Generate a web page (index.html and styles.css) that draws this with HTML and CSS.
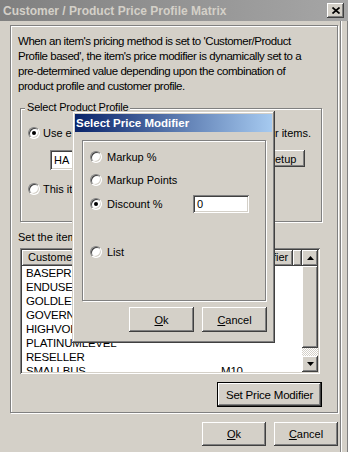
FILE: index.html
```html
<!DOCTYPE html>
<html>
<head>
    <meta charset="utf-8">
    <title>Customer / Product Price Profile Matrix</title>
    <link rel="stylesheet" href="styles.css">
</head>
<body>
<div class="window">
    <div class="titlebar">
        <span class="title">Customer / Product Price Profile Matrix</span>
        <span class="close-btn">
            <svg width="8" height="7" viewBox="0 0 8 7"><path d="M0.5 0.5 L7.5 6.5 M7.5 0.5 L0.5 6.5" stroke="#000" stroke-width="1.7" fill="none"/></svg>
        </span>
    </div>
    <div class="frame">
        <div class="client">
            <div class="panel">
                <p class="intro">When an item's pricing method is set to 'Customer/Product<br>Profile based', the item's price modifier is dynamically set to a<br>pre-determined value depending upon the combination of<br>product profile and customer profile.</p>

                <div class="group">
                    <span class="legend">Select Product Profile</span>
                    <div class="opt-row">
                        <span class="radio checked"></span>
                        <span class="opt-text"><span>Use existing profile</span><span>for all other items.</span></span>
                    </div>
                    <div class="profile-row">
                        <div class="field">HA</div>
                        <button class="btn setup">Setup</button>
                    </div>
                    <div class="opt-row opt-last">
                        <span class="radio"></span>
                        <span>This item uses its own profile.</span>
                    </div>
                </div>

                <p class="set-label">Set the item price modifiers:</p>

                <div class="listview">
                    <div class="lv-main">
                        <div class="lv-header">
                            <span class="hcell col1">Customer Profile</span>
                            <span class="hcell col2">Price Modifier</span>
                            <span class="hcell col3"></span>
                        </div>
                        <div class="lv-row"><span class="col1">BASEPRICE</span><span class="col2"></span></div>
                        <div class="lv-row"><span class="col1">ENDUSER</span><span class="col2"></span></div>
                        <div class="lv-row"><span class="col1">GOLDLEVEL</span><span class="col2"></span></div>
                        <div class="lv-row"><span class="col1">GOVERNMENT</span><span class="col2"></span></div>
                        <div class="lv-row"><span class="col1">HIGHVOLUME</span><span class="col2"></span></div>
                        <div class="lv-row"><span class="col1">PLATINUMLEVEL</span><span class="col2"></span></div>
                        <div class="lv-row"><span class="col1">RESELLER</span><span class="col2"></span></div>
                        <div class="lv-row"><span class="col1">SMALLBUS</span><span class="col2">M10</span></div>
                    </div>
                    <div class="lv-scroll">
                        <span class="sb-btn"><svg width="7" height="4" viewBox="0 0 7 4"><polygon points="0,4 3.5,0 7,4" fill="#000"/></svg></span>
                        <span class="sb-thumb"></span>
                        <span class="sb-track"></span>
                        <span class="sb-btn"><svg width="7" height="4" viewBox="0 0 7 4"><polygon points="0,0 7,0 3.5,4" fill="#000"/></svg></span>
                    </div>
                </div>

                <div class="actions">
                    <button class="btn default wide">Set Price Modifier</button>
                </div>
            </div>

            <div class="footer">
                <button class="btn"><u>O</u>k</button>
                <button class="btn"><u>C</u>ancel</button>
            </div>
        </div>
        <div class="edge"></div>
    </div>

    <!-- modal dialog over the matrix window -->
    <div class="modal">
        <div class="modal-title">Select Price Modifier</div>
        <div class="modal-group">
            <div class="mrow"><span class="radio"></span>Markup %</div>
            <div class="mrow m2"><span class="radio"></span>Markup Points</div>
            <div class="mrow m3"><span class="radio checked"></span><span class="mlabel">Discount %</span><span class="field small">0</span></div>
            <div class="mrow m4"><span class="radio"></span>List</div>
        </div>
        <div class="mbtns">
            <button class="btn"><u>O</u>k</button>
            <button class="btn"><u>C</u>ancel</button>
        </div>
    </div>
</div>
</body>
</html>
```

FILE: styles.css
```css
* {
    box-sizing: border-box;
}

body {
    margin: 0;
    background: #d4d0c8;
    font-family: "Liberation Sans", Arial, sans-serif;
    font-size: 11px;
    color: #000;
}

.window {
    position: relative;
    width: 348px;
    height: 452px;
    overflow: hidden;
    background: #d4d0c8;
}

.titlebar {
    height: 21px;
    display: flex;
    align-items: center;
    justify-content: space-between;
    padding: 0 4px 0 3px;
    background: linear-gradient(90deg, #808080, #a6a6a6);
}

.title {
    font-size: 12px;
    font-weight: bold;
    color: #d4d0c8;
}

.close-btn {
    width: 17px;
    height: 15px;
    display: flex;
    align-items: center;
    justify-content: center;
    background: #d4d0c8;
    box-shadow: inset -1px -1px #404040, inset 1px 1px #fff, inset -2px -2px #808080;
}

.frame {
    display: flex;
    height: 431px;
}

.client {
    width: 340px;
}

.edge {
    flex: 1;
    border-left: 1px solid #808080;
    border-right: 1px solid #808080;
    box-shadow: inset 1px 0 #fff;
}

/* etched frames */
.panel, .group, .modal-group {
    border: 1px solid #808080;
    box-shadow: inset 1px 1px 0 #fff, 1px 1px 0 #fff;
}

.panel {
    margin: 4px 0 0 10px;
    width: 328px;
    height: 388px;
    padding: 8px 15px 0 7px;
}

.intro {
    margin: 0;
    line-height: 15px;
    white-space: nowrap;
    font-size: 11.5px;
    letter-spacing: -0.45px;
}

.group {
    position: relative;
    margin: 14px 0 0 2px;
    width: 302px;
    height: 114px;
    padding: 16px 0 0 7px;
}

.legend {
    position: absolute;
    top: -9px;
    left: 4px;
    padding: 0 2px;
    line-height: 14px;
    letter-spacing: -0.2px;
    background: #d4d0c8;
}

.opt-row {
    display: flex;
    align-items: center;
    height: 16px;
}

.opt-text {
    display: flex;
    justify-content: space-between;
    width: 268px;
}

.opt-last {
    margin-top: 11px;
}

.radio {
    position: relative;
    flex: none;
    width: 12px;
    height: 12px;
    margin-right: 3px;
    border-radius: 50%;
    background: #fff;
    border: 1px solid;
    border-color: #808080 #fff #fff #808080;
    box-shadow: inset 1px 1px #404040, inset -1px -1px #d4d0c8;
}

.radio.checked::after {
    content: "";
    position: absolute;
    left: 3px;
    top: 3px;
    width: 4px;
    height: 4px;
    border-radius: 50%;
    background: #000;
}

.profile-row {
    display: flex;
    align-items: flex-start;
    margin: 9px 0 0 22px;
    height: 20px;
}

.field {
    width: 200px;
    height: 20px;
    padding-left: 4px;
    line-height: 20px;
    background: #fff;
    box-shadow: inset 1px 1px #808080, inset -1px -1px #fff, inset 2px 2px #404040, inset -2px -2px #d4d0c8;
}

.btn {
    width: 64px;
    height: 24px;
    padding: 0;
    border: none;
    font-family: inherit;
    font-size: 11px;
    color: #000;
    background: #d4d0c8;
    box-shadow: inset -1px -1px #404040, inset 1px 1px #fff, inset -2px -2px #808080, inset 2px 2px #d4d0c8;
}

.btn.setup {
    width: 46px;
    height: 17px;
    margin-left: 9px;
}

.btn.default {
    border: 1px solid #000;
}

.btn.wide {
    width: 105px;
    height: 25px;
    font-size: 11.5px;
    letter-spacing: -0.2px;
}

.set-label {
    margin: 8px 0 0;
    line-height: 14px;
}

.listview {
    display: flex;
    margin: 4px 0 0 2px;
    width: 300px;
    height: 126px;
    padding: 2px;
    background: #fff;
    box-shadow: inset 1px 1px #808080, inset -1px -1px #fff, inset 2px 2px #404040, inset -2px -2px #d4d0c8;
}

.lv-main {
    flex: 1;
    overflow: hidden;
}

.lv-header {
    display: flex;
    height: 16px;
}

.hcell {
    height: 16px;
    line-height: 15px;
    background: #d4d0c8;
    box-shadow: inset -1px -1px #404040, inset 1px 1px #fff, inset -2px -2px #808080;
}

.col1 {
    width: 194px;
    padding-left: 4px;
}

.col2 {
    width: 77px;
    padding-left: 5px;
}

.hcell.col1 {
    padding-left: 6px;
}

.col3 {
    flex: 1;
}

.lv-row {
    display: flex;
    height: 14px;
    line-height: 14px;
    font-size: 11.5px;
    letter-spacing: -0.2px;
}

.lv-scroll {
    width: 16px;
    display: flex;
    flex-direction: column;
}

.sb-btn, .sb-thumb {
    background: #d4d0c8;
    box-shadow: inset -1px -1px #404040, inset 1px 1px #fff, inset -2px -2px #808080, inset 2px 2px #d4d0c8;
}

.sb-btn {
    height: 16px;
    display: flex;
    align-items: center;
    justify-content: center;
}

.sb-thumb {
    height: 82px;
}

.sb-track {
    flex: 1;
    background: repeating-conic-gradient(#fff 0 25%, #d4d0c8 0 50%) 0 0 / 2px 2px;
}

.actions {
    display: flex;
    justify-content: flex-end;
    margin-top: 8px;
}

.footer {
    display: flex;
    justify-content: flex-end;
    gap: 8px;
    margin-top: 9px;
    padding-right: 2px;
}

.footer .btn {
    width: 64px;
    height: 24px;
}

/* Select Price Modifier dialog */
.modal {
    position: absolute;
    left: 72px;
    top: 111px;
    width: 203px;
    height: 232px;
    padding: 3px;
    background: #d4d0c8;
    box-shadow: inset -1px -1px #404040, inset 1px 1px #d4d0c8, inset -2px -2px #808080, inset 2px 2px #fff;
}

.modal-title {
    height: 18px;
    line-height: 18px;
    padding-left: 1px;
    font-size: 11.5px;
    font-weight: bold;
    color: #fff;
    background: linear-gradient(90deg, #0a246a, #a6caf0);
}

.modal-group {
    margin: 8px 0 0 7px;
    width: 184px;
    height: 161px;
    padding: 7px 0 0 7px;
}

.mrow {
    display: flex;
    align-items: center;
    height: 18px;
}

.mrow .radio {
    margin-right: 5px;
}

.m2 {
    margin-top: 5px;
}

.m3 {
    margin-top: 6px;
}

.m4 {
    margin-top: 30px;
}

.mlabel {
    width: 86px;
}

.field.small {
    width: 56px;
    height: 18px;
    line-height: 18px;
}

.mbtns {
    display: flex;
    justify-content: flex-end;
    gap: 8px;
    margin-top: 6px;
    padding-right: 5px;
}

.mbtns .btn {
    width: 65px;
    height: 25px;
}
```
